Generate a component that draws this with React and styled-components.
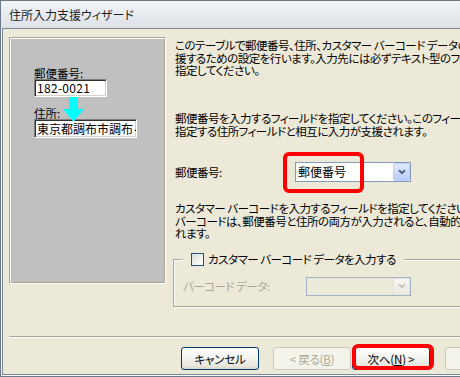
import React from "react";
import styled, { createGlobalStyle } from "styled-components";

const Global = createGlobalStyle`
  html, body { margin: 0; padding: 0; overflow: hidden; background: #ece9d8; }
  body {
    font-family: "Noto Sans CJK JP", "Noto Sans", sans-serif;
    font-size: 11.5px;
    letter-spacing: -0.5px;
    color: #000;
    font-feature-settings: "palt";
  }
`;

const Window = styled.div`
  width: 540px;
  height: 377px;
  box-sizing: border-box;
  border: 1px solid #6d7a89;
  border-right: none;
  display: flex;
  flex-direction: column;
  background: #dfe3e9;
`;

const TitleBar = styled.div`
  height: 27px;
  flex: none;
  display: flex;
  align-items: center;
  padding-left: 8px;
  background: linear-gradient(#f2f4f7, #dde2e8);
  color: #1e1e1e;
  font-size: 12px;
  letter-spacing: 0;
`;

const Frame = styled.div`
  flex: 1;
  display: flex;
  flex-direction: column;
  border-left: 1px solid #f6f7f9;
  border-bottom: 1px solid #f6f7f9;
`;

const Client = styled.div`
  flex: 1;
  display: flex;
  flex-direction: column;
  border-left: 1px solid #7d8896;
  border-top: 1px solid #7d8896;
  border-bottom: 1px solid #7d8896;
  background: #ece9d8;
`;

const Main = styled.div`
  height: 307px;
  box-sizing: border-box;
  padding: 8px 0 0 6px;
  display: flex;
  align-items: flex-start;
  flex: none;
`;

const PanelOuter = styled.div`
  width: 157px;
  height: 247px;
  box-sizing: border-box;
  flex: none;
  border: 1px solid;
  border-color: #aca899 #fff #fff #aca899;
  display: flex;
`;

const PanelInner = styled.div`
  flex: 1;
  position: relative;
  border: 1px solid;
  border-color: #fff #aca899 #aca899 #fff;
  background: #c0c0c0;
  padding: 28px 0 0 23px;
  display: flex;
  flex-direction: column;
  align-items: flex-start;
  letter-spacing: 0;
`;

const SampleLabel = styled.div`
  line-height: 12px;
  margin-top: ${(p) => p.$gap || 0}px;
`;

const SampleField = styled.div`
  width: ${(p) => p.$w}px;
  height: ${(p) => p.$h}px;
  box-sizing: border-box;
  background: #fff;
  border: 1px solid;
  border-color: #808080 #fff #fff #808080;
  box-shadow: inset 1px 1px 0 #303030, inset -1px -1px 0 #d4d0c8;
  padding: 0 2px;
  font-size: 12px;
  line-height: ${(p) => p.$h - 2}px;
  white-space: nowrap;
  overflow: hidden;
  letter-spacing: ${(p) => p.$ls || 0}px;
  font-feature-settings: normal;
`;

const FlowArrow = styled.svg`
  position: absolute;
  left: 52px;
  top: 58px;
  width: 21px;
  height: 25px;
`;

const RightCol = styled.div`
  margin: 2px 0 0 9px;
  display: flex;
  flex-direction: column;
  align-items: flex-start;
`;

const Para = styled.div`
  white-space: nowrap;
  line-height: 12.5px;
  margin-top: ${(p) => p.$mt || 0}px;
`;

const FieldRow = styled.div`
  display: flex;
  align-items: center;
  margin-top: ${(p) => p.$mt || 0}px;
  color: ${(p) => (p.$disabled ? "#aca899" : "#000")};
`;

const FieldLabel = styled.div`
  width: ${(p) => p.$w}px;
  line-height: 14px;
`;

const ComboWrap = styled.div`
  position: relative;
`;

const Combo = styled.div`
  width: ${(p) => p.$w}px;
  height: ${(p) => p.$h}px;
  box-sizing: border-box;
  border: 1px solid ${(p) => (p.$disabled ? "#a3b3c7" : "#7f9db9")};
  background: ${(p) => (p.$disabled ? "#ece9d8" : "#fff")};
  display: flex;
  align-items: center;
  padding-left: 2px;
  line-height: 14px;
  font-size: 12px;
  letter-spacing: 0;
`;

const DropButton = styled.div`
  margin-left: auto;
  width: 17px;
  height: 100%;
  box-sizing: border-box;
  border: 1px solid ${(p) => (p.$disabled ? "#e6e4da" : "#bfd0fb")};
  border-radius: 2px;
  background: ${(p) =>
    p.$disabled
      ? "linear-gradient(#f6f5f0, #ebe9df)"
      : "linear-gradient(#e2ebfe, #b7cbf8)"};
  display: flex;
  align-items: center;
  justify-content: center;
`;

const Highlight = styled.span`
  position: absolute;
  left: ${(p) => p.$l}px;
  top: ${(p) => p.$t}px;
  width: ${(p) => p.$w}px;
  height: ${(p) => p.$h}px;
  box-sizing: border-box;
  border: 4px solid #ff0000;
  border-radius: 6px;
  pointer-events: none;
`;

const Group = styled.fieldset`
  margin: 13px 0 0 -2px;
  padding: 11px 10px 10px 9px;
  width: 320px;
  min-width: 0;
  border: 1px solid #aca899;
  box-shadow: inset 1px 1px 0 #fff, 1px 1px 0 #fff;
`;

const Legend = styled.legend`
  padding: 0 8px;
  margin: 0;
  height: 13px;
  display: flex;
  align-items: center;
  gap: 4px;
  line-height: 13px;
  background: #ece9d8;
`;

const CheckBox = styled.span`
  width: 13px;
  height: 13px;
  box-sizing: border-box;
  border: 1px solid #1c5180;
  background: linear-gradient(135deg, #dcdcd7, #ffffff);
  flex: none;
`;

const Separator = styled.div`
  margin-left: 6px;
  border-top: 1px solid #aca899;
  border-bottom: 1px solid #fff;
  flex: none;
`;

const ButtonRow = styled.div`
  display: flex;
  margin-top: 9px;
  padding-left: 178px;
`;

const ButtonSlot = styled.div`
  position: relative;
  margin-left: ${(p) => p.$ml || 0}px;
`;

const Button = styled.div`
  width: 78px;
  height: 23px;
  box-sizing: border-box;
  border: 1px solid ${(p) => (p.$disabled ? "#c9c7ba" : "#003c74")};
  border-radius: 3px;
  background: ${(p) =>
    p.$disabled
      ? "#f5f4ea"
      : "linear-gradient(#ffffff, #f4f4f0 45%, #e8e6dc 85%, #d8d2c6)"};
  color: ${(p) => (p.$disabled ? "#aca899" : "#000")};
  display: flex;
  align-items: center;
  justify-content: center;
  line-height: 14px;
  white-space: nowrap;
  letter-spacing: -0.2px;
`;

const Key = styled.span`
  text-decoration: underline;
`;

const Chevron = ({ color }) => (
  <svg width="8" height="6" viewBox="0 0 8 6">
    <path d="M1 1.2 L4 4.2 L7 1.2" stroke={color} strokeWidth="2" fill="none" />
  </svg>
);

export default function App() {
  return (
    <>
      <Global />
      <Window>
        <TitleBar>住所入力支援ウィザード</TitleBar>
        <Frame>
          <Client>
            <Main>
              <PanelOuter>
                <PanelInner>
                  <SampleLabel>郵便番号:</SampleLabel>
                  <SampleField $w={73} $h={18} $ls={0.3}>182-0021</SampleField>
                  <SampleLabel $gap={10}>住所:</SampleLabel>
                  <SampleField $w={103} $h={19}>東京都調布市調布ヶ丘</SampleField>
                  <FlowArrow viewBox="0 0 21 25">
                    <polygon points="6,0 15,0 15,12 21,12 10.5,25 0,12 6,12" fill="#00ffff" />
                  </FlowArrow>
                </PanelInner>
              </PanelOuter>
              <RightCol>
                <Para>
                  このテーブルで郵便番号、住所、カスタマー バーコード データの入力を支
                  <br />
                  援するための設定を行います。入力先には必ずテキスト型のフィールドを
                  <br />
                  指定してください。
                </Para>
                <Para $mt={35.5}>
                  郵便番号を入力するフィールドを指定してください。このフィールドで
                  <br />
                  指定する住所フィールドと相互に入力が支援されます。
                </Para>
                <FieldRow $mt={25}>
                  <FieldLabel $w={120}>郵便番号:</FieldLabel>
                  <ComboWrap>
                    <Combo $w={116} $h={20}>
                      郵便番号
                      <DropButton>
                        <Chevron color="#4d6185" />
                      </DropButton>
                    </Combo>
                    <Highlight $l={-12} $t={-10} $w={81} $h={41} />
                  </ComboWrap>
                </FieldRow>
                <Para $mt={20}>
                  カスタマー バーコードを入力するフィールドを指定してください。カスタマー
                  <br />
                  バーコードは、郵便番号と住所の両方が入力されると、自動的に入力さ
                  <br />
                  れます。
                </Para>
                <Group>
                  <Legend>
                    <CheckBox />
                    カスタマー バーコード データを入力する
                  </Legend>
                  <FieldRow $disabled>
                    <FieldLabel $w={123}>バーコード データ:</FieldLabel>
                    <Combo $w={105} $h={19} $disabled>
                      <DropButton $disabled>
                        <Chevron color="#c9c7ba" />
                      </DropButton>
                    </Combo>
                  </FieldRow>
                </Group>
              </RightCol>
            </Main>
            <Separator />
            <ButtonRow>
              <ButtonSlot>
                <Button>キャンセル</Button>
              </ButtonSlot>
              <ButtonSlot $ml={14}>
                <Button $disabled>
                  &lt; 戻る(<Key>B</Key>)
                </Button>
              </ButtonSlot>
              <ButtonSlot $ml={1}>
                <Button>
                  次へ(<Key>N</Key>) &gt;
                </Button>
                <Highlight $l={0} $t={-3} $w={82} $h={26} />
              </ButtonSlot>
              <ButtonSlot $ml={15}>
                <Button $disabled>完了</Button>
              </ButtonSlot>
            </ButtonRow>
          </Client>
        </Frame>
      </Window>
    </>
  );
}
